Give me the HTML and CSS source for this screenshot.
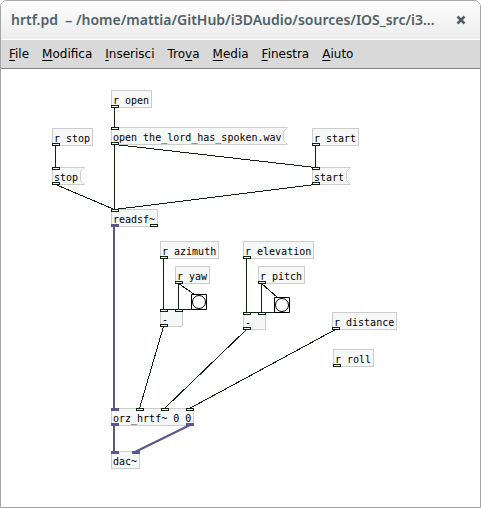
FILE: index.html
```html
<!DOCTYPE html>
<html lang="it">
<head>
<meta charset="utf-8">
<title>hrtf.pd</title>
<link rel="stylesheet" href="styles.css">
</head>
<body>
<div class="window">
  <header class="titlebar">
    <h1 class="title">hrtf.pd&nbsp; – /home/mattia/GitHub/i3DAudio/sources/IOS_src/i3...</h1>
    <button class="close" type="button" aria-label="Chiudi">
      <svg width="10" height="10" viewBox="0 0 10 10"><path d="M1.500 1.500 8.500 8.500M8.500 1.500 1.500 8.500"/></svg>
    </button>
  </header>
  <nav class="menubar">
    <button type="button"><u>F</u>ile</button>
    <button type="button"><u>M</u>odifica</button>
    <button type="button"><u>I</u>nserisci</button>
    <button type="button">Tro<u>v</u>a</button>
    <button type="button"><u>M</u>edia</button>
    <button type="button"><u>F</u>inestra</button>
    <button type="button"><u>A</u>iuto</button>
  </nav>
  <main class="canvas">
    <div class="node r-open">r open<i class="port out"></i></div>
    <div class="node r-stop">r stop<i class="port out"></i></div>
    <div class="node r-start">r start<i class="port out"></i></div>
    <button type="button" class="node message msg-open">open the_lord_has_spoken.wav<svg class="flag" viewBox="0 0 6 18"><path class="cut" d="M6 0 2 4V14L6 18Z"/><path d="M5.500 .5 1.500 4.500V13.500L5.500 17.500"/></svg><i class="port in"></i><i class="port out"></i></button>
    <button type="button" class="node message msg-stop">stop<svg class="flag" viewBox="0 0 6 18"><path class="cut" d="M6 0 2 4V14L6 18Z"/><path d="M5.500 .5 1.500 4.500V13.500L5.500 17.500"/></svg><i class="port in"></i><i class="port out"></i></button>
    <button type="button" class="node message msg-start">start<svg class="flag" viewBox="0 0 6 18"><path class="cut" d="M6 0 2 4V14L6 18Z"/><path d="M5.500 .5 1.500 4.500V13.500L5.500 17.500"/></svg><i class="port in"></i><i class="port out"></i></button>
    <div class="node readsf">readsf~<i class="port in"></i><i class="port out signal"></i><i class="port out last"></i></div>
    <div class="node r-azimuth">r azimuth<i class="port out"></i></div>
    <div class="node r-yaw">r yaw<i class="port out"></i></div>
    <div class="node minus-a">-<i class="port in"></i><i class="port in last"></i><i class="port out"></i></div>
    <div class="node r-elevation">r elevation<i class="port out"></i></div>
    <div class="node r-pitch">r pitch<i class="port out"></i></div>
    <div class="node minus-b">-<i class="port in"></i><i class="port in last"></i><i class="port out"></i></div>
    <div class="node r-distance">r distance<i class="port out"></i></div>
    <div class="node r-roll">r roll<i class="port out"></i></div>
    <div class="node orz">orz_hrtf~ 0 0<i class="port in signal"></i><i class="port in second"></i><i class="port in third"></i><i class="port in last"></i><i class="port out signal"></i><i class="port out signal last"></i></div>
    <div class="node dac">dac~<i class="port in signal"></i><i class="port in signal last"></i></div>
    <svg class="wires" width="479" height="438" viewBox="1 69 479 438" aria-hidden="true">
      <g class="control">
        <path d="M114.500 108V127"/>
        <path d="M55.500 146V167"/>
        <path d="M315.500 146V167"/>
        <path d="M114.500 145V209"/>
        <path d="M115 144.500 315.500 167.500"/>
        <path d="M55.500 184.500 114.500 209.500"/>
        <path d="M315.500 184.500 114.500 209.500"/>
        <path d="M163.500 259V309"/>
        <path d="M178.500 284V309"/>
        <path d="M178.500 283.500 194.500 294.500"/>
        <path d="M163 309.500H195"/>
        <path d="M163.500 326.500 139.500 408.500"/>
        <path d="M246.500 259V312"/>
        <path d="M261.500 284V312"/>
        <path d="M261.500 283.500 277.500 297.500"/>
        <path d="M246 312.500H278"/>
        <path d="M246.500 329.500 164.500 408.500"/>
        <path d="M335.500 329.500 189.500 408.500"/>
      </g>
      <g class="audio">
        <path d="M114 227V408"/>
        <path d="M114 426V451"/>
        <path d="M190 425 135 452"/>
      </g>
    </svg>
    <button type="button" class="bang bang-a" aria-label="bang yaw"><svg width="16" height="16" viewBox="0 0 16 16"><path d="M.5 .5H15.500V15.500H.5Z"/><circle cx="8" cy="8" r="6.500"/></svg></button>
    <button type="button" class="bang bang-b" aria-label="bang pitch"><svg width="16" height="16" viewBox="0 0 16 16"><path d="M.5 .5H15.500V15.500H.5Z"/><circle cx="8" cy="8" r="6.500"/></svg></button>
  </main>
</div>
</body>
</html>
```
FILE: styles.css
```css
* {
  box-sizing: border-box;
}

body {
  margin: 0;
  background: #fff;
}

button {
  margin: 0;
  padding: 0;
  border: 0;
  background: none;
  color: inherit;
  font: inherit;
  text-align: left;
}

.window {
  display: flex;
  flex-direction: column;
  min-height: 100vh;
  border: 1px solid #a4a4a4;
  border-radius: 7px 7px 0 0;
  overflow: hidden;
  background: #fff;
}

.titlebar {
  display: flex;
  align-items: center;
  justify-content: space-between;
  height: 38px;
  padding: 0 14px 0 10px;
  background: linear-gradient(#fdfdfd, #ededed);
  color: #4f6168;
}

.title {
  margin: 0;
  font: 600 14px/20px "Noto Sans", sans-serif;
  white-space: nowrap;
}

.close {
  display: flex;
}

.close svg {
  fill: none;
  stroke: #4f6168;
  stroke-width: 2.5;
}

.menubar {
  display: flex;
  gap: 13px;
  height: 30px;
  padding: 0 8px;
  border-top: 1px solid #fff;
  border-bottom: 1px solid #858585;
  background: #d9d9d9;
  color: #000;
  font: 12px/28px "DejaVu Sans", sans-serif;
}

.menubar u {
  text-underline-offset: 2px;
  text-decoration-skip-ink: none;
}

.canvas {
  position: relative;
  flex: 1;
  min-height: 438px;
  font: 10px/16px "DejaVu Sans Mono", monospace;
  color: #000;
}

.wires {
  position: absolute;
  left: 0;
  top: 0;
  fill: none;
  pointer-events: none;
}

.control {
  stroke: #112211;
  stroke-width: 1;
  shape-rendering: crispEdges;
}

.audio {
  stroke: #58588c;
  stroke-width: 2;
}

.node {
  position: absolute;
  height: 18px;
  padding: 2px 2px 0 1px;
  border: 1px solid #ccc;
  background: #f6f8f8;
  line-height: 15px;
  white-space: nowrap;
}

.node:not(.message) {
  line-height: 16px;
}

.message {
  padding-right: 7px;
  border-right: 0;
}

.flag {
  position: absolute;
  right: 0;
  top: -1px;
  width: 6px;
  height: 18px;
  fill: none;
  stroke: #ccc;
}

.flag .cut {
  fill: #fff;
  stroke: none;
}

.port {
  position: absolute;
  left: -1px;
  width: 8px;
  height: 3px;
  border: 1px solid #112211;
  background: #f6f8f8;
}

.port.in { top: -1px; }
.port.out { bottom: -1px; }
.port.second { left: 24px; }
.port.third { left: 49px; }
.port.last { left: auto; right: -1px; }

.port.signal {
  border-color: #58588c;
  background: #58588c;
}

.bang {
  position: absolute;
  width: 16px;
  height: 16px;
}

.bang svg {
  display: block;
  fill: #fcfcfc;
  stroke: #000;
}

.r-open { left: 110px; top: 21px; }
.r-stop { left: 51px; top: 59px; }
.r-start { left: 311px; top: 59px; }
.msg-open { left: 110px; top: 58px; width: 177px; }
.msg-stop { left: 51px; top: 98px; }
.msg-start { left: 311px; top: 98px; }
.readsf { left: 110px; top: 140px; }
.r-azimuth { left: 159px; top: 172px; }
.r-yaw { left: 174px; top: 197px; }
.minus-a { left: 159px; top: 240px; width: 23px; }
.r-elevation { left: 242px; top: 172px; }
.r-pitch { left: 257px; top: 197px; }
.minus-b { left: 242px; top: 243px; width: 23px; }
.r-distance { left: 331px; top: 243px; }
.r-roll { left: 332px; top: 280px; }
.orz { left: 110px; top: 339px; }
.dac { left: 110px; top: 382px; }
.bang-a { left: 190px; top: 225px; }
.bang-b { left: 273px; top: 228px; }
```
